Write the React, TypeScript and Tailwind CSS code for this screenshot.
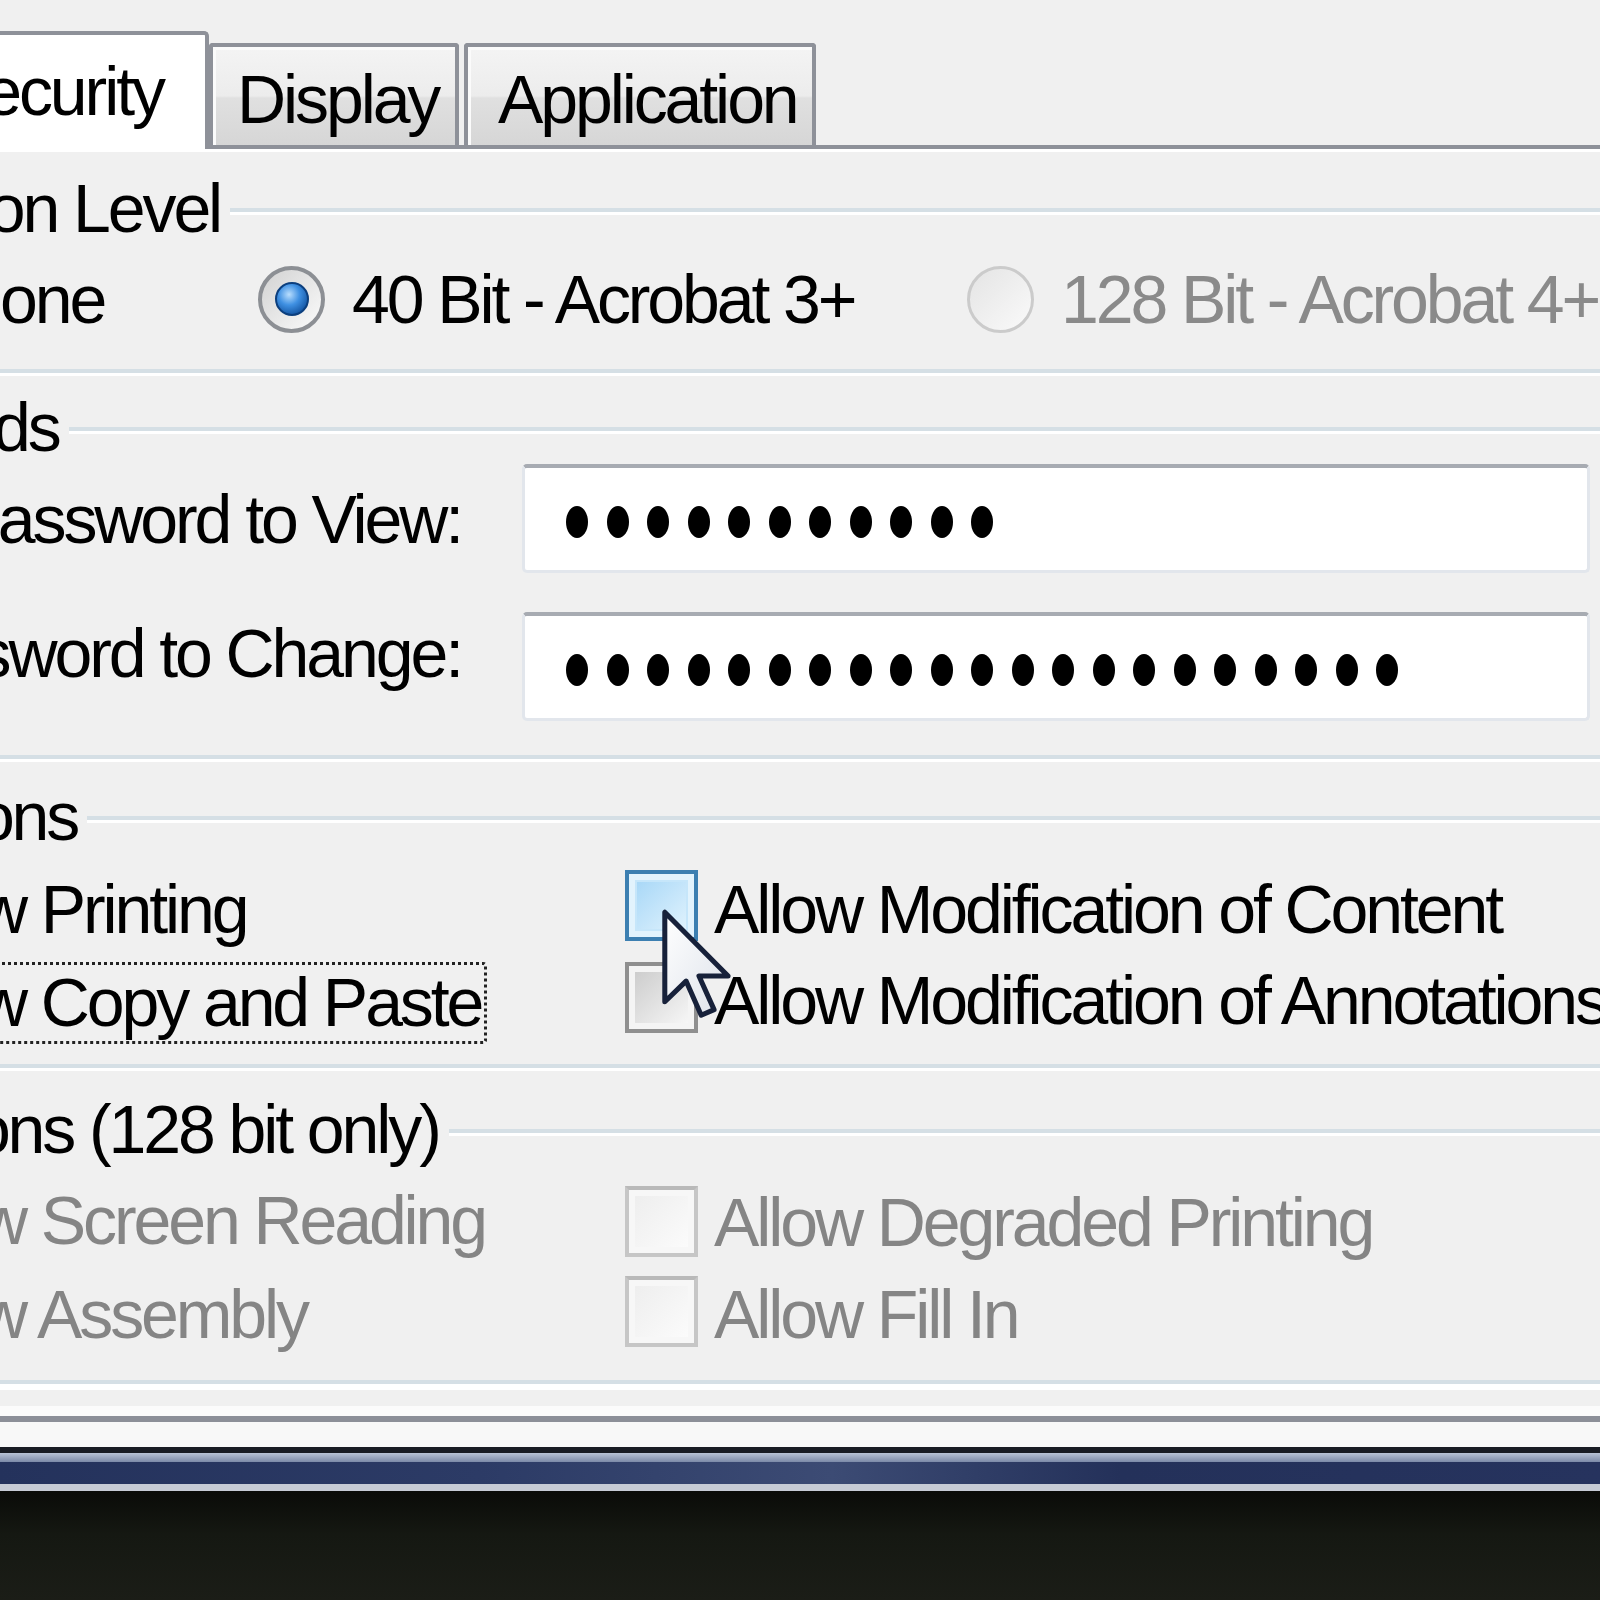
import React from "react";

type Kind = "hover" | "normal" | "disabled";

const Checkbox = ({ kind }: { kind: Kind }) => {
  if (kind === "hover") {
    return (
      <div className="w-[73px] h-[71px] shrink-0 border-4 border-[#3c7fb1] bg-[#e2f3fd] p-[6px]">
        <div className="w-full h-full border-2 border-[#c6e6fa] bg-gradient-to-br from-[#a9d8f7] to-[#dff2fd]" />
      </div>
    );
  }
  if (kind === "normal") {
    return (
      <div className="w-[73px] h-[71px] shrink-0 border-4 border-[#8f8f8f] bg-[#f4f4f4] p-[6px]">
        <div className="w-full h-full bg-gradient-to-br from-[#cdcdcd] to-[#f6f6f6]" />
      </div>
    );
  }
  return (
    <div className="w-[73px] h-[71px] shrink-0 border-4 border-[#c6c6c6] border-t-[#b9b9b9] bg-[#f7f7f7] p-[6px]">
      <div className="w-full h-full bg-gradient-to-br from-[#eeeeee] to-[#fbfbfb]" />
    </div>
  );
};

const Radio = ({ checked, disabled }: { checked?: boolean; disabled?: boolean }) => {
  if (disabled) {
    return (
      <div className="w-[67px] h-[67px] shrink-0 rounded-full border-[3px] border-[#cbcbcb] bg-gradient-to-br from-[#e4e4e4] to-[#fafafa]" />
    );
  }
  return (
    <div className="w-[67px] h-[67px] shrink-0 rounded-full border-4 border-[#8c8f94] bg-gradient-to-br from-[#d2d2d2] to-[#fbfbfb] flex items-center justify-center">
      {checked && (
        <div className="w-[34px] h-[34px] rounded-full border-2 border-[#0c3f7e] bg-[radial-gradient(circle_at_40%_35%,#b9defe_0%,#3f90e2_40%,#0d4c99_85%)]" />
      )}
    </div>
  );
};

const GroupHeader = ({ label, labelClass, className }: { label: string; labelClass: string; className: string }) => (
  <div className={`flex items-start h-[68px] shrink-0 ${className}`}>
    <span className={`whitespace-nowrap shrink-0 ${labelClass}`}>{label}</span>
    <div className="flex-1 ml-[10px] mt-[34px] h-[7px] border-t-4 border-[#d5dfe5] bg-white" />
  </div>
);

const GroupRule = ({ className }: { className: string }) => (
  <div className={`h-[7px] shrink-0 border-t-4 border-[#d5dfe5] bg-white ${className}`} />
);

const PasswordBox = ({ count }: { count: number }) => (
  <div className="flex-1 mr-[10px] h-[109px] rounded-[5px] border-[3px] border-t-4 border-[#e2e6ec] border-t-[#a7abb2] bg-white flex items-center gap-[18.5px] pl-[41px] pt-[5px]">
    {Array.from({ length: count }).map((_, i) => (
      <span key={i} className="w-[22px] h-[32px] rounded-[50%] bg-black shrink-0" />
    ))}
  </div>
);

const Tab = ({ label, className }: { label: string; className: string }) => (
  <div
    className={`h-[102px] shrink-0 border-4 border-b-0 border-[#8e9199] rounded-t-[4px] bg-[linear-gradient(#f4f4f4,#ececec_50%,#e0e0e0_52%,#d6d6d6)] shadow-[inset_3px_3px_0_#fbfbfb] pt-[18px] whitespace-nowrap ${className}`}
  >
    {label}
  </div>
);

export default function App() {
  return (
    <div className="relative w-[1600px] h-[1600px] overflow-hidden bg-[#f0f0f0] font-['Liberation_Sans',Arial,sans-serif] text-[68px] leading-[68px] tracking-[-3.1px] text-black flex flex-col">
      {/* tab strip */}
      <div className="flex items-end h-[149px] shrink-0">
        <div className="-ml-[100px] w-[309px] h-[118px] shrink-0 border-t-4 border-r-4 border-[#8e9199] rounded-tr-[5px] bg-white pl-[42px] pt-[22px] whitespace-nowrap">
          Security
        </div>
        <div className="flex-1 flex items-end gap-[5px] h-full border-b-4 border-[#8e9199]">
          <Tab label="Display" className="w-[250px] pl-[24px]" />
          <Tab label="Application" className="w-[352px] pl-[30px]" />
        </div>
      </div>
      <div className="h-[3px] shrink-0 bg-white" />

      {/* Encryption level */}
      <GroupHeader label="Encryption Level" labelClass="-ml-[233px]" className="mt-[22px]" />
      <div className="mt-[23px] flex items-center h-[68px] shrink-0 whitespace-nowrap">
        <div className="-ml-[140px] w-[398px] shrink-0 flex items-center gap-[27px]">
          <Radio />
          <span>None</span>
        </div>
        <div className="w-[709px] shrink-0 flex items-center gap-[27px]">
          <Radio checked />
          <span>40 Bit - Acrobat 3+</span>
        </div>
        <div className="shrink-0 flex items-center gap-[27px] text-[#8a8a8a]">
          <Radio disabled />
          <span>128 Bit - Acrobat 4+</span>
        </div>
      </div>
      <GroupRule className="mt-[36px]" />

      {/* Passwords */}
      <GroupHeader label="Passwords" labelClass="-ml-[246px]" className="mt-[17px]" />
      <div className="mt-[3px] flex items-start h-[109px] shrink-0">
        <div className="w-[461px] shrink-0 mt-[21px] flex justify-end">
          <span className="whitespace-nowrap shrink-0">Password to View:</span>
        </div>
        <div className="w-[61px] shrink-0" />
        <PasswordBox count={11} />
      </div>
      <div className="mt-[39px] flex items-start h-[109px] shrink-0">
        <div className="w-[461px] shrink-0 mt-[7px] flex justify-end">
          <span className="whitespace-nowrap shrink-0">Password to Change:</span>
        </div>
        <div className="w-[61px] shrink-0" />
        <PasswordBox count={21} />
      </div>
      <GroupRule className="mt-[34px]" />

      {/* Permissions */}
      <GroupHeader label="Permissions" labelClass="-ml-[259px]" className="mt-[20px]" />
      <div className="mt-[20px] grid grid-cols-[625px_1fr] grid-rows-[92px_82px] shrink-0 whitespace-nowrap">
        <div className="-ml-[122px] pt-[5px]">Allow Printing</div>
        <div className="flex items-start">
          <Checkbox kind="hover" />
          <span className="ml-[16px] mt-[5px]">Allow Modification of Content</span>
        </div>
        <div className="-ml-[128px] flex items-start">
          <span className="border-[3px] border-dotted border-[#222] rounded-[4px] px-[3px] pt-[3px] pb-[5px]">
            Allow Copy and Paste
          </span>
        </div>
        <div className="flex items-start">
          <Checkbox kind="normal" />
          <span className="ml-[16px] mt-[4px]">Allow Modification of Annotations</span>
        </div>
      </div>
      <GroupRule className="mt-[20px]" />

      {/* Permissions (128 bit) */}
      <GroupHeader label="Permissions (128 bit only)" labelClass="-ml-[263px]" className="mt-[24px]" />
      <div className="mt-[23px] grid grid-cols-[625px_1fr] grid-rows-[90px_71px] shrink-0 whitespace-nowrap text-[#858585]">
        <div className="-ml-[122px] pt-[0px]">Allow Screen Reading</div>
        <div className="flex items-start">
          <Checkbox kind="disabled" />
          <span className="ml-[16px] mt-[2px]">Allow Degraded Printing</span>
        </div>
        <div className="-ml-[122px] pt-[4px]">Allow Assembly</div>
        <div className="flex items-start">
          <Checkbox kind="disabled" />
          <span className="ml-[16px] mt-[4px]">Allow Fill In</span>
        </div>
      </div>
      <div className="mt-[33px] h-[10px] shrink-0 border-t-4 border-[#d5dfe5] bg-white" />

      {/* dialog bottom + window frame */}
      <div className="h-[16px] shrink-0" />
      <div className="h-[10px] shrink-0 bg-[#fbfbfb]" />
      <div className="h-[6px] shrink-0 bg-[#8c8f98]" />
      <div className="h-[25px] shrink-0 bg-[#f8f8f8]" />
      <div className="h-[6px] shrink-0 bg-[#191c24]" />
      <div className="h-[9px] shrink-0 bg-gradient-to-b from-[#b9c3d6] to-[#7c8aa8]" />
      <div className="h-[22px] shrink-0 bg-[linear-gradient(90deg,#24325c,#2c3b66_30%,#3c4b74_52%,#24315a_70%,#26335e)]" />
      <div className="h-[7px] shrink-0 bg-[#c6cbd5]" />
      <div className="flex-1 bg-[linear-gradient(180deg,#0a0b08,#151812_40%,#1b1d17)]" />

      {/* mouse pointer */}
      <svg
        className="absolute left-[662px] top-[909px]"
        width="70"
        height="110"
        viewBox="-0.5 -0.5 12.5 19.5"
      >
        <defs>
          <linearGradient id="cur" x1="0" y1="0" x2="1" y2="1">
            <stop offset="0" stopColor="#ffffff" />
            <stop offset="1" stopColor="#dde2ea" />
          </linearGradient>
        </defs>
        <path
          d="M0 0 L0 16 L3.8 12.3 L6.5 18.4 L8.8 17.4 L6.1 11.4 L11.3 11.4 Z"
          fill="url(#cur)"
          stroke="#17213a"
          strokeWidth="0.9"
          strokeLinejoin="round"
        />
      </svg>
    </div>
  );
}
